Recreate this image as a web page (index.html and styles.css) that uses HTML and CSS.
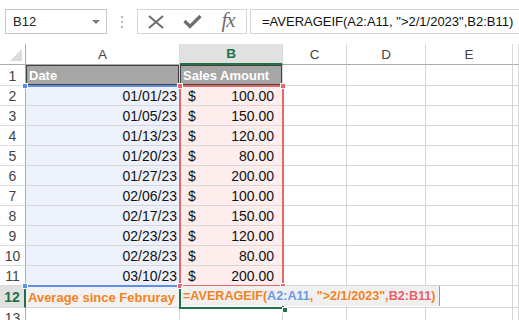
FILE: index.html
```html
<!DOCTYPE html>
<html lang="en">
<head>
    <meta charset="UTF-8">
    <title>AVERAGEIF</title>
    <link rel="stylesheet" href="styles.css">
</head>
<body>
    <div class="formula-bar">
        <div class="name-box">
            <span>B12</span>
            <svg width="8" height="4" viewBox="0 0 8 4"><path d="M0 0 L8 0 L4 4 Z" fill="#7a7a7a"/></svg>
        </div>
        <div class="grip">
            <svg width="2" height="12" viewBox="0 0 2 12"><rect y="0" width="2" height="2" fill="#b8b8b8"/><rect y="5" width="2" height="2" fill="#b8b8b8"/><rect y="10" width="2" height="2" fill="#b8b8b8"/></svg>
        </div>
        <div class="fx-buttons">
            <div class="fx-btn">
                <svg width="16" height="14" viewBox="0 0 16 14"><path d="M1 1 L15 13 M15 1 L1 13" stroke="#6e6e6e" stroke-width="2"/></svg>
            </div>
            <div class="fx-btn">
                <svg width="19" height="15" viewBox="0 0 19 15"><path d="M1.5 7 L7 12.5 L17.5 2" stroke="#6e6e6e" stroke-width="3.2" fill="none"/></svg>
            </div>
            <div class="fx-btn"><span class="fx">fx</span></div>
        </div>
        <div class="formula-input">=AVERAGEIF(A2:A11, "&gt;2/1/2023",B2:B11)</div>
    </div>

    <div class="sheet">
        <div class="grid cells">
            <!-- column headers -->
            <div class="cell corner">
                <svg width="12" height="12" viewBox="0 0 12 12"><path d="M12 0 L12 12 L0 12 Z" fill="#dcdcdc"/></svg>
            </div>
            <div class="cell ch">A</div>
            <div class="cell ch selected">B</div>
            <div class="cell ch">C</div>
            <div class="cell ch">D</div>
            <div class="cell ch">E</div>
            <div class="cell ch"></div>

            <!-- row 1 -->
            <div class="cell rh">1</div>
            <div class="cell title">Date</div>
            <div class="cell title">Sales Amount</div>
            <div class="cell"></div><div class="cell"></div><div class="cell"></div><div class="cell"></div>

            <div class="cell rh">2</div>
            <div class="cell date">01/01/23</div>
            <div class="cell money"><span>$</span><span>100.00</span></div>
            <div class="cell"></div><div class="cell"></div><div class="cell"></div><div class="cell"></div>

            <div class="cell rh">3</div>
            <div class="cell date">01/05/23</div>
            <div class="cell money"><span>$</span><span>150.00</span></div>
            <div class="cell"></div><div class="cell"></div><div class="cell"></div><div class="cell"></div>

            <div class="cell rh">4</div>
            <div class="cell date">01/13/23</div>
            <div class="cell money"><span>$</span><span>120.00</span></div>
            <div class="cell"></div><div class="cell"></div><div class="cell"></div><div class="cell"></div>

            <div class="cell rh">5</div>
            <div class="cell date">01/20/23</div>
            <div class="cell money"><span>$</span><span>80.00</span></div>
            <div class="cell"></div><div class="cell"></div><div class="cell"></div><div class="cell"></div>

            <div class="cell rh">6</div>
            <div class="cell date">01/27/23</div>
            <div class="cell money"><span>$</span><span>200.00</span></div>
            <div class="cell"></div><div class="cell"></div><div class="cell"></div><div class="cell"></div>

            <div class="cell rh">7</div>
            <div class="cell date">02/06/23</div>
            <div class="cell money"><span>$</span><span>100.00</span></div>
            <div class="cell"></div><div class="cell"></div><div class="cell"></div><div class="cell"></div>

            <div class="cell rh">8</div>
            <div class="cell date">02/17/23</div>
            <div class="cell money"><span>$</span><span>150.00</span></div>
            <div class="cell"></div><div class="cell"></div><div class="cell"></div><div class="cell"></div>

            <div class="cell rh">9</div>
            <div class="cell date">02/23/23</div>
            <div class="cell money"><span>$</span><span>120.00</span></div>
            <div class="cell"></div><div class="cell"></div><div class="cell"></div><div class="cell"></div>

            <div class="cell rh">10</div>
            <div class="cell date">02/28/23</div>
            <div class="cell money"><span>$</span><span>80.00</span></div>
            <div class="cell"></div><div class="cell"></div><div class="cell"></div><div class="cell"></div>

            <div class="cell rh">11</div>
            <div class="cell date">03/10/23</div>
            <div class="cell money"><span>$</span><span>200.00</span></div>
            <div class="cell"></div><div class="cell"></div><div class="cell"></div><div class="cell"></div>

            <!-- row 12 -->
            <div class="cell rh active">12</div>
            <div class="cell label">Average since Februray</div>
            <div class="cell"></div>
            <div class="cell"></div><div class="cell"></div><div class="cell"></div><div class="cell"></div>

            <div class="cell rh">13</div>
            <div class="cell"></div><div class="cell"></div><div class="cell"></div><div class="cell"></div><div class="cell"></div><div class="cell"></div>
        </div>

        <!-- range highlights and the cell being edited, same grid on top -->
        <div class="grid overlay">
            <div class="sel-box"></div>
            <div class="range range-a"><i class="handle blue tl"></i><i class="handle blue bl"></i></div>
            <div class="range range-b"><i class="handle red tl"></i><i class="handle red tr"></i><i class="handle red bl"></i><i class="handle red br"></i></div>
            <div class="editor"><span class="f-or">=AVERAGEIF(</span><span class="f-bl">A2:A11</span><span class="f-or">, "&gt;2/1/2023",</span><span class="f-rd">B2:B11</span><span class="f-or">)</span></div>
            <div class="sel-handle"><i class="handle green br"></i></div>
        </div>
    </div>
</body>
</html>
```

FILE: styles.css
```css
*{
    box-sizing: border-box;
}
html, body{
    margin: 0;
    overflow: hidden;
    background: #fff;
}
body{
    font-family: "Liberation Sans", Arial, sans-serif;
    color: #222;
    width: 519px;
    height: 320px;
}

/* formula bar */
.formula-bar{
    height: 44px;
    padding-top: 9px;
    display: flex;
    align-items: flex-start;
}
.name-box{
    margin-left: 5px;
    width: 102px;
    height: 25px;
    border: 1px solid #c6c6c6;
    display: flex;
    align-items: center;
    justify-content: space-between;
    padding: 0 6px 0 7px;
    font-size: 13px;
    color: #222;
}
.grip{
    width: 30px;
    height: 25px;
    display: flex;
    align-items: center;
    justify-content: center;
    padding-right: 1px;
}
.fx-buttons{
    width: 110px;
    height: 25px;
    border: 1px solid #d4d4d4;
    display: flex;
}
.fx-btn{
    flex: 1;
    display: flex;
    align-items: center;
    justify-content: center;
}
.fx{
    font-family: "Liberation Serif", "Times New Roman", serif;
    font-style: italic;
    font-size: 21px;
    color: #6e6e6e;
    margin-top: -2px;
    letter-spacing: -1px;
}
.formula-input{
    margin-left: 3px;
    flex: 1;
    height: 25px;
    border: 1px solid #d4d4d4;
    border-right: none;
    padding-left: 11px;
    font-size: 13px;
    line-height: 23px;
    white-space: nowrap;
    color: #111;
}

/* sheet: two identical grids stacked */
.sheet{
    display: grid;
    width: 519px;
    height: 276px;
    overflow: hidden;
}
.grid{
    grid-area: 1 / 1;
    display: grid;
    grid-template-columns: 26px 154px 103px 64px 79px 87px 1fr;
    grid-template-rows: 21px 21px repeat(10, 20px) 22px 20px;
}
.overlay{
    pointer-events: none;
    z-index: 1;
}
.cell{
    border-right: 1px solid #d6d6d6;
    border-bottom: 1px solid #d6d6d6;
    display: flex;
    align-items: flex-end;
    padding: 0 2px 1px;
    font-size: 14px;
    white-space: nowrap;
    min-width: 0;
}
.corner{
    border-right-color: #ababab;
    border-bottom-color: #ababab;
    justify-content: flex-end;
    padding: 0 3px 3px 0;
}
.ch{
    justify-content: center;
    align-items: center;
    font-size: 13.5px;
    color: #444;
    border-bottom-color: #ababab;
    border-right-color: #dadada;
    padding: 0;
}
.ch.selected{
    background: #e1e1e1;
    color: #217346;
    font-weight: bold;
    border-bottom: 2px solid #217346;
}
.rh{
    justify-content: center;
    align-items: center;
    font-size: 14px;
    color: #444;
    border-right-color: #ababab;
    border-bottom-color: #dadada;
    padding: 1px 0 0;
}
.rh.active{
    background: #e1e1e1;
    color: #217346;
    font-weight: bold;
    border-right: 2px solid #217346;
}
.title{
    background: #a6a6a6;
    color: #fff;
    font-weight: bold;
    font-size: 13px;
    box-shadow: inset 0 0 0 1px #404040;
    padding: 0 2px 2px 3px;
}
.date{
    background: #edf1fb;
    justify-content: flex-end;
    padding-right: 2px;
    color: #111;
}
.money{
    background: #fdeded;
    justify-content: space-between;
    padding: 0 8px 1px 8px;
    color: #111;
}
.label{
    background: #f2f2f2;
    color: #f58220;
    font-weight: bold;
    font-size: 13px;
    align-items: center;
    padding: 1px 2px 0 2px;
}

/* overlays */
.range, .sel-box, .editor, .sel-handle{
    position: relative;
}
.range-a{
    grid-column: 2;
    grid-row: 3 / 13;
    margin: -1px 0 -1px 0;
    border-top: 2px solid #5d8ee8;
    border-bottom: 2px solid #5d8ee8;
    z-index: 2;
}
.range-b{
    grid-column: 3;
    grid-row: 3 / 13;
    margin: -1px -1px -1px -1px;
    border: 2px solid #e5676b;
    z-index: 3;
}
.sel-box{
    grid-column: 3;
    grid-row: 13;
    margin: -1px -1px -1px -1px;
    border: 2px solid #217346;
    z-index: 1;
}
.sel-handle{
    grid-column: 3;
    grid-row: 13;
    margin: -1px -1px -1px -1px;
    z-index: 5;
}
.editor{
    grid-column: 3 / 7;
    grid-row: 13;
    justify-self: start;
    width: 259px;
    height: 20px;
    margin: 0 0 0 1px;
    background: #f0f0f0;
    border-right: 1px solid #9a9a9a;
    padding: 0 0 0 2px;
    display: flex;
    align-items: center;
    font-size: 12.6px;
    font-weight: bold;
    white-space: nowrap;
    z-index: 4;
}
.f-or{ color: #f58220; }
.f-bl{ color: #6b98e8; }
.f-rd{ color: #e8606b; }

.handle{
    position: absolute;
    width: 6px;
    height: 6px;
    border: 1px solid #fff;
}
.handle.blue{ background: #5d8ee8; }
.handle.red{ background: #e5676b; }
.handle.green{ background: #217346; }
.handle.tl{ top: -4px; left: -4px; }
.handle.tr{ top: -4px; right: -4px; }
.handle.bl{ bottom: -4px; left: -4px; }
.handle.br{ bottom: -4px; right: -4px; }
```
